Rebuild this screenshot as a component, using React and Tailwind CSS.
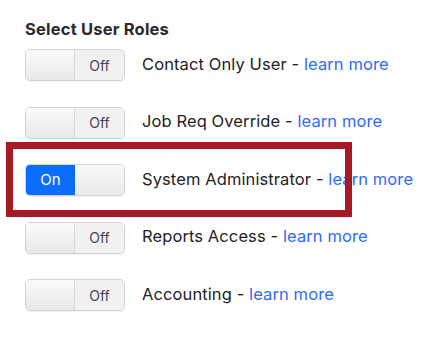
import React from "react";

const roles = [
  { name: "Contact Only User", on: false },
  { name: "Job Req Override", on: false },
  { name: "System Administrator", on: true },
  { name: "Reports Access", on: false },
  { name: "Accounting", on: false },
];

function Toggle({ on }) {
  return (
    <div className="flex h-[32px] w-[100px] shrink-0 overflow-hidden rounded-[5px] border border-[#d4d4d4] shadow-[0_1px_1px_rgba(0,0,0,0.06)]">
      {on ? (
        <>
          <div className="flex w-1/2 items-center justify-center bg-[#0b6dfb] text-[15px] text-white">On</div>
          <div className="w-1/2 bg-gradient-to-b from-[#fafafa] to-[#e9e9e9]" />
        </>
      ) : (
        <>
          <div className="w-1/2 border-r border-[#d8d8d8] bg-gradient-to-b from-[#fbfbfb] to-[#e8e8e8]" />
          <div className="flex w-1/2 items-center justify-center bg-[#f1f1f1] text-[14px] text-[#4a3f55]">Off</div>
        </>
      )}
    </div>
  );
}

export default function App() {
  return (
    <div
      className="relative h-[339px] w-[446px] bg-white pl-[25px] pt-[17px] text-[#222]"
      style={{ fontFamily: "Inter, 'Noto Sans', sans-serif" }}
    >
      <h2 className="text-[16.5px] font-bold leading-[24px] tracking-[0.2px] text-[#2a2a2a]">Select User Roles</h2>
      <div className="mt-[8px] flex flex-col gap-[25.5px]">
        {roles.map((r) => (
          <div key={r.name} className="flex items-center gap-[17px]">
            <Toggle on={r.on} />
            <div className="-mt-[3px] text-[16.5px] leading-[24px] tracking-[0.1px] text-[#222]">
              {r.name} - <span className="text-[#2f6cf5]">learn more</span>
            </div>
          </div>
        ))}
      </div>
      <div className="pointer-events-none absolute left-[6px] top-[142px] h-[75px] w-[346px] border-[7px] border-[#a51b24]" />
    </div>
  );
}
